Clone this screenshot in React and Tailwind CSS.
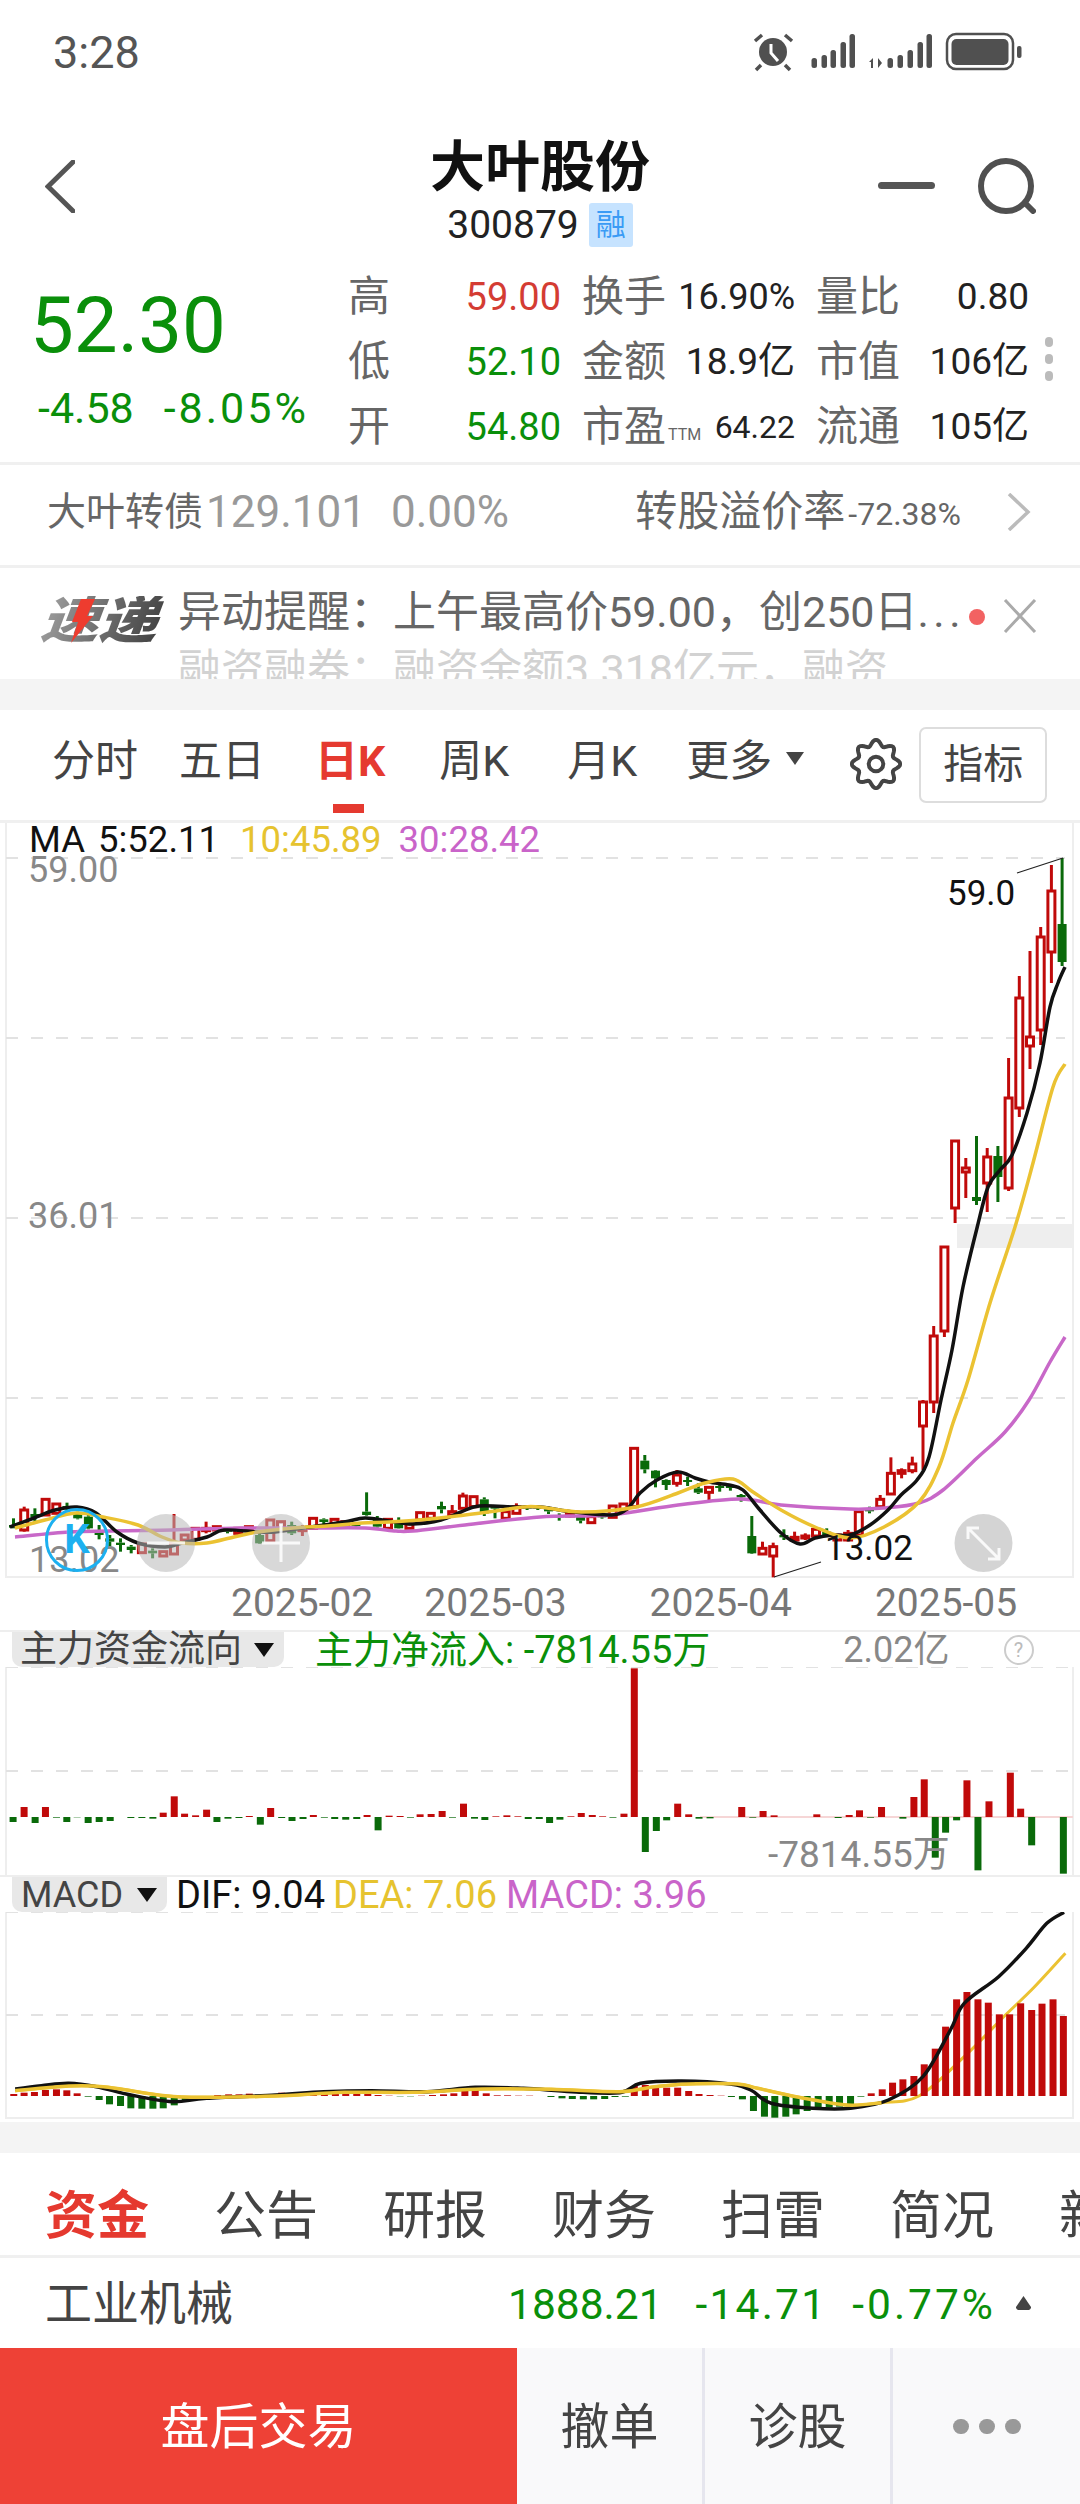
import React from "react";

const RED = "#c00a0a";
const GRN = "#0a6a0a";

// y in crop units: 1400 + v / 3
const c1 = [
  ["g",355,375,383,385],["r",320,330,390,395],["g",325,342,352,370],["r",298,298,345,345],["r",310,312,340,340],
  ["g",308,318,326,330],["g",335,340,355,358],["g",345,350,385,388],["g",375,395,405,418],["g",405,415,425,440],
  ["g",415,428,435,455],["g",435,440,450,460],["r",432,432,458,458],["g",445,452,460,475],["r",455,455,468,468],
  ["r",342,430,462,462],["r",405,405,420,425],["r",385,385,418,420],["r",365,385,392,400],["r",378,380,390,395],
  ["g",382,385,395,400],["r",382,385,400,405],["r",378,380,388,390],["g",395,405,430,432],["r",360,360,422,425],
  ["r",365,365,385,388],["g",365,375,400,405],["r",375,385,392,408],["r",355,355,385,388],["g",355,358,366,375],
  ["r",355,358,375,378],["r",362,365,375,378],["g",368,372,378,380],["g",277,335,345,347],["g",348,360,380,383],
  ["r",358,358,385,386],["g",352,368,385,386],["r",372,372,385,386],["r",338,338,360,362],["r",340,340,355,358],
  ["g",305,318,328,340],["r",315,335,345,350],["r",278,288,325,328],["r",288,290,320,322],["g",292,298,340,348],
  ["g",315,320,326,355],["r",335,335,355,357],["r",310,320,340,342],["g",315,318,325,330],["g",315,318,325,330],
  ["g",320,328,334,342],["g",340,345,352,362],["r",335,340,348,352],["g",345,350,362,370],["r",348,350,368,370],
  ["g",342,345,352,356],["r",316,318,352,354],["r",312,312,335,338],["r",145,145,320,322],["g",165,182,208,220],
  ["g",210,212,235,262],["g",238,240,255,270],["r",210,225,250,260],["g",230,240,246,258],["g",250,265,278,282],
  ["r",258,262,277,302],["g",255,258,264,275],["g",255,258,262,272],["g",282,285,292,305],["g",348,408,460,462],
  ["r",425,445,462,465],["r",428,440,468,532],["g",388,405,412,420],["r",395,412,420,425],["r",400,408,414,420],
  ["r",388,388,408,410],["g",385,395,408,410],["r",405,405,420,420],["r",390,400,420,422],["r",335,335,405,408],
  ["g",320,328,334,340],["r",285,298,320,322],["r",172,220,282,284],["r",205,212,220,235],["r",170,192,212,220],
].map(([t, a, b, c, d]) => [t, 1400 + a / 3, 1400 + b / 3, 1400 + c / 3, 1400 + d / 3]);

const c2 = [
  ["r",1400,1402,1426,1470],["r",1326,1336,1402,1413],["r",1247,1247,1331,1337],["r",1141,1141,1208,1223],
  ["r",1158,1168,1172,1198],["g",1136,1197,1201,1205],["r",1148,1157,1183,1212],["g",1146,1156,1177,1202],
  ["r",1058,1098,1188,1191],["r",976,998,1108,1117],["r",951,1037,1046,1069],["r",927,937,1030,1045],
  ["r",865,891,952,983],["g",858,924,962,966],
];
const candles = [...c1, ...c2];

function smooth(pts) {
  let d = `M${pts[0][0]} ${pts[0][1]}`;
  for (let i = 0; i < pts.length - 1; i++) {
    const p0 = pts[Math.max(0, i - 1)];
    const p1 = pts[i];
    const p2 = pts[i + 1];
    const p3 = pts[Math.min(pts.length - 1, i + 2)];
    const a = [p1[0] + (p2[0] - p0[0]) / 6, p1[1] + (p2[1] - p0[1]) / 6];
    const b = [p2[0] - (p3[0] - p1[0]) / 6, p2[1] - (p3[1] - p1[1]) / 6];
    d += `C${a[0].toFixed(1)} ${a[1].toFixed(1)} ${b[0].toFixed(1)} ${b[1].toFixed(1)} ${p2[0]} ${p2[1]}`;
  }
  return d;
}

const ma5 = [[10,1527],[34,1518],[55,1510],[77,1507],[96,1513],[117,1532],[138,1543],[165,1547],[182,1543],[207,1537],[224,1530],[258,1532],[275,1532],[310,1527],[344,1522],[365,1518],[389,1521],[413,1524],[441,1520],[461,1512],[479,1506],[516,1507],[540,1507],[574,1512],[612,1515],[628,1508],[640,1493],[657,1480],[678,1472],[695,1478],[709,1482],[729,1485],[743,1490],[760,1510],[781,1533],[800,1544],[815,1538],[833,1535],[850,1535],[870,1525],[888,1510],[901,1495],[917,1480],[929,1457],[941,1400],[952,1350],[963,1287],[977,1228],[988,1187],[1000,1170],[1012,1155],[1027,1113],[1040,1063],[1050,1007],[1058,983],[1065,967]];
const ma10 = [[15,1528],[45,1520],[76,1513],[103,1517],[138,1525],[162,1537],[182,1543],[207,1543],[234,1537],[258,1532],[293,1528],[327,1526],[362,1523],[389,1522],[430,1519],[465,1515],[496,1511],[523,1507],[540,1507],[581,1512],[636,1507],[678,1493],[705,1483],[733,1479],[753,1492],[781,1510],[815,1527],[850,1538],[884,1527],[919,1502],[939,1467],[953,1423],[968,1380],[990,1303],[1015,1227],[1033,1163],[1053,1087],[1065,1064]];
const ma30 = [[15,1537],[69,1532],[110,1531],[172,1530],[241,1528],[310,1528],[365,1528],[396,1531],[413,1531],[465,1525],[540,1517],[609,1515],[678,1505],[740,1499],[781,1505],[850,1509],[884,1508],[919,1503],[943,1490],[977,1458],[1005,1432],[1029,1400],[1050,1362],[1065,1337]];

const flowBars = [[19,-15],[35,30],[51,-18],[66,30],[82,-2],[97,-15],[112,-1],[128,-18],[144,-15],[160,-12],[190,-3],[206,-3],[222,-5],[237,13],[253,62],[268,10],[284,5],[300,22],[315,-15],[331,-5],[347,-3],[362,3],[378,-23],[393,27],[409,-3],[424,-12],[440,-6],[455,6],[471,-2],[486,-6],[502,-8],[518,-6],[533,6],[549,-40],[565,4],[581,3],[596,-2],[610,8],[626,9],[642,18],[657,-2],[673,40],[689,-5],[704,-9],[720,2],[736,5],[752,2],[767,-6],[783,-6],[798,-18],[813,-8],[829,2],[844,12],[860,6],[875,2],[890,-2],[906,10],[921,446],[937,-105],[953,-42],[968,-10],[984,40],[1000,8],[1015,-5],[1031,-4],[1077,30],[1093,-2],[1108,18],[1124,5],[1186,8],[1217,-3],[1233,6],[1248,20],[1264,-2],[1280,30],[1311,-5],[1327,60],[1342,113],[1358,-122],[1373,-47],[1389,-10],[1404,110],[1420,-160],[1436,47],[1467,133],[1482,25],[1498,-85],[1544,-170]];

const macdBars = [[20,6],[35,10],[50,12],[66,18],[82,20],[97,17],[112,8],[128,-2],[144,-12],[159,-25],[175,-30],[190,-37],[206,-38],[222,-38],[237,-37],[253,-28],[269,-15],[285,-8],[300,-2],[316,3],[332,5],[347,5],[362,7],[378,3],[393,6],[409,10],[424,6],[440,5],[455,6],[471,10],[487,12],[502,12],[518,10],[534,8],[549,3],[565,1],[581,-1],[596,-1],[612,1],[628,3],[644,5],[659,8],[675,15],[690,18],[706,8],[722,2],[737,2],[753,1],[769,1],[800,-3],[816,-7],[831,-9],[847,-10],[862,-10],[878,-9],[893,-3],[908,-2],[921,30],[937,33],[952,28],[968,25],[984,25],[1000,15],[1015,6],[1031,3],[1047,1],[1062,-3],[1078,-10],[1094,-45],[1110,-62],[1125,-65],[1141,-62],[1156,-55],[1172,-45],[1188,-38],[1204,-35],[1219,-32],[1235,-25],[1250,-2],[1265,8],[1281,20],[1296,40],[1311,50],[1327,60],[1342,95],[1358,142],[1373,208],[1389,290],[1404,312],[1420,290],[1435,280],[1451,245],[1466,245],[1482,278],[1498,258],[1513,277],[1529,290],[1544,240]];

const dif = [[22,687],[60,677],[100,670],[140,680],[190,705],[250,725],[300,715],[400,705],[470,695],[540,692],[620,695],[690,682],[760,685],[830,695],[900,698],[930,670],[990,663],[1060,672],[1090,690],[1120,730],[1180,745],[1235,745],[1290,720],[1340,650],[1380,510],[1400,430],[1450,350],[1490,265],[1520,190],[1545,157]];
const dea = [[22,692],[100,678],[150,680],[240,707],[300,712],[400,708],[500,697],[600,697],[700,687],[800,688],[900,695],[950,680],[1000,672],[1070,672],[1100,685],[1160,712],[1230,735],[1280,728],[1335,707],[1400,590],[1460,465],[1500,385],[1547,280]];
const mx = (p) => p.map(([x, y]) => [+(x / 1.452).toFixed(1), +(1860 + y / 3).toFixed(1)]);

const gearPath = (() => {
  let d = "";
  for (let k = 0; k <= 96; k++) {
    const t = (k / 96) * Math.PI * 2;
    const r = 20.5 + 2.8 * Math.cos(8 * t);
    d += `${k ? "L" : "M"}${(25 + r * Math.sin(t)).toFixed(2)} ${(25 - r * Math.cos(t)).toFixed(2)}`;
  }
  return d + "Z";
})();

function Dash({ y, x2 = 1065 }) {
  return <line x1="6" x2={x2} y1={y} y2={y} stroke="#e2e2e2" strokeWidth="2" strokeDasharray="12 13" />;
}

function Stat({ label, value, color, size, tag }) {
  return (
    <>
      <span className="text-[42px] leading-none text-[#666]">{label}</span>
      {tag}
      <span className={`ml-auto leading-none ${size} ${color}`}>{value}</span>
    </>
  );
}

function StatRow({ a, b, c }) {
  return (
    <div className="flex h-[65px] items-center">
      <div className="flex w-[213px] items-center">{a}</div>
      <div className="ml-[21px] flex w-[213px] items-center">{b}</div>
      <div className="ml-[21px] flex w-[213px] items-center">{c}</div>
    </div>
  );
}

const Sep = () => <div className="h-[3px] shrink-0 bg-[#f0f0f0]" />;

export default function App() {
  return (
    <div
      className="flex h-[2504px] w-[1080px] flex-col overflow-hidden bg-white text-[#444]"
      style={{ fontFamily: 'Roboto, "Noto Sans CJK SC", sans-serif' }}
    >
      {/* status bar */}
      <div className="flex h-[104px] shrink-0 items-center justify-between pl-[53px] pr-[58px]">
        <span className="text-[45px] leading-none text-[#555]">3:28</span>
        <svg width="270" height="40" viewBox="752 32 270 40" fill="#505050">
          <circle cx="773" cy="52" r="14" />
          <path d="M771 44v9l7 8" stroke="#fff" strokeWidth="3" fill="none" />
          <path d="M755 41l7-6M792 41l-7-6M761 65l-5 5M785 65l5 5" stroke="#505050" strokeWidth="3.5" fill="none" />
          {[[814,58],[824,55],[833,50],[843,42],[852,34]].map(([x, t]) => (
            <rect key={x} x={x - 2.5} y={t} width="5.5" height={68 - t} rx="2.5" />
          ))}
          <path d="M871 60l-2 2h2v6h2V58zM878 58v10l4-5z" />
          {[[890,58],[900,55],[910,50],[920,42],[929,34]].map(([x, t]) => (
            <rect key={x} x={x - 2.5} y={t} width="5.5" height={68 - t} rx="2.5" />
          ))}
          <rect x="947" y="34" width="66" height="35" rx="9" fill="none" stroke="#505050" strokeWidth="2.5" />
          <rect x="951.5" y="39" width="57" height="26" rx="5" />
          <rect x="1017" y="46" width="4.5" height="12" rx="2" />
        </svg>
      </div>

      {/* header */}
      <div className="flex h-[158px] shrink-0 items-start">
        <div className="w-[340px] pl-[45px] pt-[56px]">
          <svg width="30" height="53" viewBox="0 0 30 53" fill="none" stroke="#555" strokeWidth="5" strokeLinecap="round">
            <path d="M28 2L3 26.5 28 51" />
          </svg>
        </div>
        <div className="flex w-[400px] flex-col items-center pt-[35px]">
          <div className="text-[55px] font-bold leading-[56px] text-[#111]">大叶股份</div>
          <div className="mt-[8px] flex h-[44px] items-center">
            <span className="text-[39px] leading-none text-[#222]">300879</span>
            <span className="ml-[10px] flex h-[44px] w-[44px] items-center justify-center rounded-[3px] bg-[#c6e3ff] text-[30px] leading-none text-[#3a9bf5]">融</span>
          </div>
        </div>
        <div className="ml-[138px] mt-[78px] h-[7px] w-[57px] rounded-full bg-[#555]" />
        <div className="ml-[43px] pt-[54px]">
          <svg width="58" height="56" viewBox="0 0 58 56" fill="none" stroke="#505050" strokeWidth="6" strokeLinecap="round">
            <circle cx="28" cy="28" r="25" />
            <path d="M47 45l8 8" />
          </svg>
        </div>
      </div>

      {/* quote */}
      <div className="flex h-[200px] shrink-0 items-start">
        <div className="w-[348px] pl-[30px]">
          <div className="mt-[24px] text-[78px] leading-[80px] text-[#0a8f0a]">52.30</div>
          <div className="ml-[8px] mt-[20px] flex text-[43px] leading-[44px] text-[#0a8f0a]">
            <span>-4.58</span>
            <span className="ml-[30px] tracking-[3px]">-8.05%</span>
          </div>
        </div>
        <div className="flex flex-col pt-[2px]">
          <StatRow
            a={<Stat label="高" value="59.00" size="text-[38px]" color="text-[#d43c33]" />}
            b={<Stat label="换手" value="16.90%" size="text-[36px]" color="text-[#222]" />}
            c={<Stat label="量比" value="0.80" size="text-[37px]" color="text-[#222]" />}
          />
          <StatRow
            a={<Stat label="低" value="52.10" size="text-[38px]" color="text-[#0a8f0a]" />}
            b={<Stat label="金额" value="18.9亿" size="text-[37px]" color="text-[#222]" />}
            c={<Stat label="市值" value="106亿" size="text-[37px]" color="text-[#222]" />}
          />
          <StatRow
            a={<Stat label="开" value="54.80" size="text-[38px]" color="text-[#0a8f0a]" />}
            b={<Stat label="市盈" value="64.22" size="text-[32px]" color="text-[#222]" tag={<span className="ml-[2px] mt-[16px] text-[16px] leading-none text-[#666]">TTM</span>} />}
            c={<Stat label="流通" value="105亿" size="text-[37px]" color="text-[#222]" />}
          />
        </div>
        <div className="ml-[16px] mt-[75px] flex flex-col gap-[7px]">
          <div className="h-[10px] w-[8px] rounded-full bg-[#bbb]" />
          <div className="h-[10px] w-[8px] rounded-full bg-[#bbb]" />
          <div className="h-[10px] w-[8px] rounded-full bg-[#bbb]" />
        </div>
      </div>
      <Sep />

      {/* convertible */}
      <div className="flex h-[100px] shrink-0 items-center pb-[6px] pl-[47px] pr-[49px]">
        <span className="text-[39px] leading-none text-[#666]">大叶转债</span>
        <span className="ml-[3px] text-[44px] leading-none text-[#999]">129.101</span>
        <span className="ml-[25px] text-[44px] leading-none text-[#999]">0.00%</span>
        <span className="ml-auto text-[42px] leading-none text-[#666]">转股溢价率</span>
        <span className="ml-[3px] mr-[46px] mt-[4px] text-[32px] leading-none text-[#666]">-72.38%</span>
        <svg width="24" height="38" viewBox="0 0 24 38" fill="none" stroke="#bbb" strokeWidth="3.5">
          <path d="M2 1l19 18L2 37" />
        </svg>
      </div>
      <Sep />

      {/* alert */}
      <div className="flex h-[111px] shrink-0 overflow-hidden">
        <div className="relative ml-[45px] mt-[30px] flex h-[46px] w-[118px] items-center justify-center">
          <span className="-skew-x-[18deg] scale-x-[1.16] bg-gradient-to-r from-[#999] to-[#444] bg-clip-text text-[50px] font-black leading-none text-transparent">速递</span>
          <svg className="absolute left-[24px] top-[1px] z-10" width="26" height="44" viewBox="0 0 26 44" fill="#ee3c2f">
            <path d="M12 0h14L18 17h6L2 44l7-21H3z" />
          </svg>
        </div>
        <div className="ml-[15px] flex flex-1 flex-col pt-[15px]">
          <div className="flex h-[58px] items-center">
            <span className="whitespace-nowrap text-[43px] leading-[58px] text-[#666]">异动提醒：上午最高价59.00，创250日<span className="tracking-[4.5px]">...</span></span>
            <div className="ml-[4px] mt-[10px] h-[16px] w-[16px] shrink-0 rounded-full bg-[#f26262]" />
            <svg className="ml-[18px] mt-[8px] shrink-0" width="34" height="34" viewBox="0 0 34 34" fill="none" stroke="#aaa" strokeWidth="3">
              <path d="M2 1l30 32M32 1L2 33" />
            </svg>
          </div>
          <div className="h-[58px] whitespace-nowrap text-[43px] leading-[58px] text-[#d2d2d2]">融资融券：融资余额3.318亿元，融资</div>
        </div>
      </div>
      <div className="h-[31px] shrink-0 bg-[#f4f4f4]" />

      {/* period tabs */}
      <div className="flex h-[110px] shrink-0 items-center pl-[52px] text-[43px] leading-none text-[#444]">
        <div className="flex items-center pb-[8px]">
          <span>分时</span>
          <span className="ml-[41px]">五日</span>
          <span className="relative ml-[50px] font-bold text-[#e53a30]">
            日K
            <span className="absolute left-[18px] top-[64px] h-[9px] w-[31px] bg-[#e53a30]" />
          </span>
          <span className="ml-[54px]">周K</span>
          <span className="ml-[58px]">月K</span>
          <span className="ml-[49px]">更多</span>
          <svg className="ml-[14px] mb-[6px]" width="18" height="13" viewBox="0 0 18 13" fill="#444"><path d="M0 0h18L9 13z" /></svg>
        </div>
        <svg className="ml-[46px] mb-[2px] shrink-0" width="52" height="52" viewBox="0 0 50 50" fill="none" stroke="#444" strokeWidth="3.8">
          <path d={gearPath} />
          <circle cx="25" cy="25" r="7" />
        </svg>
        <div className="ml-[17px] flex h-[76px] w-[128px] items-center justify-center rounded-[7px] border-2 border-[#ddd] text-[40px]">指标</div>
      </div>
      <Sep />

      {/* kline */}
      <div className="relative h-[755px] shrink-0">
        <svg className="block" width="1080" height="755" viewBox="0 823 1080 755">
          <path d="M6 823V1577H1073V823" fill="none" stroke="#eee" strokeWidth="2" />
          <rect x="957" y="1224" width="116" height="24" fill="#eee" />
          {[858, 1038, 1218, 1398].map((y) => <Dash key={y} y={y} />)}
          {candles.map(([t, wt, bt, bb, wb], i) => {
            const x = 13.5 + 10.7 * i;
            const col = t === "r" ? RED : GRN;
            return (
              <g key={i}>
                {wt < bt && <line x1={x} x2={x} y1={wt} y2={bt} stroke={col} strokeWidth="3" />}
                {wb > bb && <line x1={x} x2={x} y1={bb} y2={wb} stroke={col} strokeWidth="3" />}
                {t === "r" ? (
                  <rect x={x - 3.5} y={bt} width="7" height={Math.max(bb - bt, 2)} fill="#fff" stroke={col} strokeWidth="3" />
                ) : (
                  <rect x={x - 4.5} y={bt} width="9" height={Math.max(bb - bt, 2)} fill={col} />
                )}
              </g>
            );
          })}
          <path d={smooth(ma30)} fill="none" stroke="#c868c8" strokeWidth="3.5" />
          <path d={smooth(ma5)} fill="none" stroke="#111" strokeWidth="3.5" />
          <path d={smooth(ma10)} fill="none" stroke="#ebc232" strokeWidth="3.5" />
          <path d="M1017 873L1063 858M774 1577L821 1562" stroke="#222" strokeWidth="1.2" fill="none" />
          <circle cx="166" cy="1543" r="29" fill="#b8b8b8" fillOpacity="0.55" />
          <rect x="147" y="1541.5" width="38" height="3" fill="#fff" fillOpacity="0.8" />
          <circle cx="281" cy="1543" r="29" fill="#b8b8b8" fillOpacity="0.55" />
          <path d="M262 1543h38M281 1524v38" stroke="#fff" strokeOpacity="0.85" strokeWidth="3" />
          <circle cx="983.5" cy="1543" r="29" fill="#b8b8b8" fillOpacity="0.6" />
          <path d="M968 1528l31 31M968 1539v-11h11M999 1548v11h-11" stroke="#fff" strokeOpacity="0.85" strokeWidth="3" fill="none" />
        </svg>
        <div className="absolute left-[29px] top-[0px] flex h-[34px] items-center text-[36.5px] leading-none">
          <span className="text-[#111]">MA</span>
          <span className="ml-[13px] text-[#111]">5:52.11</span>
          <span className="ml-[21px] text-[#e6c32f]">10:45.89</span>
          <span className="ml-[17px] text-[#c964c9]">30:28.42</span>
        </div>
        <span className="absolute left-[28px] top-[28px] text-[36px] leading-[38px] text-[#888]">59.00</span>
        <span className="absolute left-[28px] top-[374px] text-[36px] leading-[38px] text-[#888]">36.01</span>
        <span className="absolute left-[29px] top-[718px] text-[36px] leading-[38px] text-[#888]">13.02</span>
        <span className="absolute left-[947px] top-[52px] text-[35px] leading-[38px] text-[#111]">59.0</span>
        <span className="absolute left-[825px] top-[706px] text-[35px] leading-[40px] text-[#111]">13.02</span>
        <div className="absolute left-[45px] top-[685px] flex h-[64px] w-[64px] items-center justify-center rounded-full border-[3px] border-[#1cb0f0] text-[40px] font-bold leading-none text-[#1cb0f0]">K</div>
      </div>

      {/* time axis */}
      <div className="flex h-[52px] shrink-0 items-center pb-[2px] pl-[231px] text-[39px] leading-none text-[#777]">
        <span>2025-02</span>
        <span className="ml-[51px]">2025-03</span>
        <span className="ml-[83px]">2025-04</span>
        <span className="ml-[83px]">2025-05</span>
      </div>
      <div className="h-[2px] shrink-0 bg-[#eee]" />

      {/* capital flow */}
      <div className="flex h-[35px] shrink-0 items-center text-[37px] leading-none">
        <div className="ml-[12px] flex h-[35px] w-[272px] items-center rounded-b-[10px] bg-[#e8e8e8] pl-[8px] text-[#444]">
          <span>主力资金流向</span>
          <svg className="ml-[12px]" width="20" height="14" viewBox="0 0 20 14" fill="#111"><path d="M0 0h20L10 14z" /></svg>
        </div>
        <span className="ml-[31px] whitespace-nowrap text-[38px] text-[#0a8f0a]">主力净流入: -7814.55万</span>
        <span className="ml-[133px] text-[36px] text-[#888]">2.02亿</span>
        <div className="ml-[54px] flex h-[30px] w-[30px] items-center justify-center rounded-full border-2 border-[#ccc] text-[20px] text-[#bbb]">?</div>
      </div>
      <div className="relative h-[208px] shrink-0">
        <svg className="block" width="1080" height="208" viewBox="0 1667 1080 208">
          <path d="M6 1667V1875M1073 1667V1875" stroke="#eee" strokeWidth="2" />
          <Dash y={1667} x2={1073} />
          <Dash y={1771} x2={1073} />
          <line x1="700" x2="1073" y1="1817" y2="1817" stroke="#f6d6d6" strokeWidth="2" />
          {flowBars.map(([zx, v]) => {
            const h = Math.abs(v) / 3;
            const y = v > 0 ? 1817 - h : 1817;
            return <rect key={zx} x={zx / 1.452 - 3.5} y={y} width="7" height={h} fill={v > 0 ? RED : GRN} />;
          })}
        </svg>
        <span className="absolute left-[768px] top-[169px] text-[37px] leading-[38px] text-[#888]">-7814.55万</span>
      </div>
      <div className="h-[2px] shrink-0 bg-[#eee]" />

      {/* MACD */}
      <div className="flex h-[35px] shrink-0 items-center text-[38px] leading-none">
        <div className="ml-[12px] flex h-[35px] w-[155px] items-center rounded-b-[10px] bg-[#e8e8e8] pl-[9px] text-[36px] text-[#444]">
          <span>MACD</span>
          <svg className="ml-[14px]" width="20" height="14" viewBox="0 0 20 14" fill="#111"><path d="M0 0h20L10 14z" /></svg>
        </div>
        <span className="ml-[9px] text-[#111]">DIF: 9.04</span>
        <span className="ml-[8px] text-[#e6c32f]">DEA: 7.06</span>
        <span className="ml-[9px] text-[#c964c9]">MACD: 3.96</span>
      </div>
      <div className="h-[210px] shrink-0">
        <svg className="block" width="1080" height="210" viewBox="0 1912 1080 210">
          <path d="M6 1912V2118H1073V1912" fill="none" stroke="#eee" strokeWidth="2" />
          <Dash y={1912} />
          <Dash y={2015} />
          <path d={smooth(mx(dea))} fill="none" stroke="#ebc232" strokeWidth="3" />
          {macdBars.map(([zx, v]) => {
            const h = Math.abs(v) / 3;
            const y = v > 0 ? 2096 - h : 2096;
            return <rect key={zx} x={zx / 1.452 - 3.5} y={y} width="7" height={h} fill={v > 0 ? RED : GRN} />;
          })}
          <path d={smooth(mx(dif))} fill="none" stroke="#111" strokeWidth="3.5" />
          <path d={smooth(mx(dea.slice(0, 18)))} fill="none" stroke="#ebc232" strokeWidth="3.5" />
        </svg>
      </div>
      <div className="h-[31px] shrink-0 bg-[#f4f4f4]" />

      {/* bottom tabs */}
      <div className="flex h-[102px] shrink-0 items-center gap-[65px] overflow-hidden whitespace-nowrap pl-[45px] pt-[26px] text-[52px] leading-none text-[#444]">
        <span className="font-bold text-[#e5392f]">资金</span>
        <span>公告</span>
        <span>研报</span>
        <span>财务</span>
        <span>扫雷</span>
        <span>简况</span>
        <span>新闻</span>
      </div>
      <Sep />

      {/* sector row */}
      <div className="flex h-[90px] shrink-0 items-center pl-[45px] pr-[49px]">
        <span className="text-[47px] leading-none text-[#444]">工业机械</span>
        <div className="ml-auto mt-[4px] flex text-[42.5px] leading-none text-[#0a8f0a]">
          <span>1888.21</span>
          <span className="ml-[33px] tracking-[2.2px]">-14.71</span>
          <span className="ml-[25px] tracking-[3px]">-0.77%</span>
        </div>
        <svg className="ml-[20px] shrink-0" width="15" height="14" viewBox="0 0 15 14" fill="#444"><path d="M7.5 0L15 11a3 3 0 0 1-2 3H2a3 3 0 0 1-2-3z" /></svg>
      </div>

      {/* bottom actions */}
      <div className="flex h-[156px] shrink-0 bg-[#f9f9fa] text-[49px] leading-none">
        <div className="flex w-[517px] items-center justify-center bg-[#ee4136] pt-[2px] text-white">盘后交易</div>
        <div className="flex w-[188px] items-center justify-center border-r-[3px] border-[#e6e6ee] pt-[2px] text-[#444]">撤单</div>
        <div className="flex w-[188px] items-center justify-center border-r-[3px] border-[#e6e6ee] pt-[2px] text-[#444]">诊股</div>
        <div className="flex flex-1 items-center justify-center gap-[10px]">
          <div className="h-[15px] w-[16px] rounded-full bg-[#999]" />
          <div className="h-[15px] w-[16px] rounded-full bg-[#999]" />
          <div className="h-[15px] w-[16px] rounded-full bg-[#999]" />
        </div>
      </div>
    </div>
  );
}
